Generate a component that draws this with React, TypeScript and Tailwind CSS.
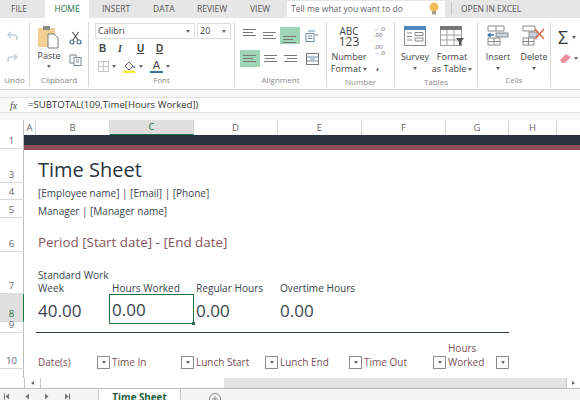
import React from "react";

const sans = "font-['Open_Sans','Noto_Sans',sans-serif]";

function Group({ w, label, children }: { w: string; label: string; children?: React.ReactNode }) {
  return (
    <div className={`${w} shrink-0 h-full flex flex-col border-r border-[#d9d9d9]`}>
      <div className="h-[53px] mt-[1px] flex">{children}</div>
      <div className="text-[8px] leading-[14px] text-[#8a8a8a] text-center whitespace-nowrap">{label}</div>
    </div>
  );
}

function Caret({ className = "" }: { className?: string }) {
  return <span className={`inline-block w-0 h-0 border-x-[2.5px] border-x-transparent border-t-[3px] border-t-[#666] ${className}`} />;
}

function FilterBtn() {
  return (
    <span className="inline-flex w-[13px] h-[13px] border border-[#8c8c8c] bg-white items-center justify-center shrink-0">
      <Caret />
    </span>
  );
}

function Lines({ active, rows, align = "l" }: { active?: boolean; rows: string; align?: string }) {
  const lines = [0, 1, 2];
  return (
    <div className={`w-[20px] h-[17px] flex flex-col ${rows} ${align === "l" ? "items-start" : align === "c" ? "items-center" : "items-end"} gap-[2px] px-[3px] ${active ? "bg-[#9fd5b7]" : ""}`}>
      {lines.map((i) => (
        <span key={i} className={`h-px bg-[#777] ${i === 1 ? "w-[10px]" : "w-[13px]"}`} />
      ))}
    </div>
  );
}

function Head({ t, on }: { t: string; on?: boolean }) {
  return (
    <div className={`h-full flex items-center justify-center border-r border-[#d4d4d4] text-[9.5px] ${on ? "bg-[#dfdfdf] border-b border-b-[#217346] text-[#217346]" : "text-[#666]"}`}>
      {t}
    </div>
  );
}

function RowHead({ t, on, h }: { t: string; on?: boolean; h: string }) {
  return (
    <div className={`${h} w-[24px] shrink-0 flex items-end justify-center pb-[1px] border-r border-b text-[9.5px] leading-[13px] ${on ? "bg-[#dfdfdf] border-r-[#217346] border-b-[#d4d4d4] text-[#217346]" : "border-r-[#bdbdbd] border-b-[#d9d9d9] text-[#666]"}`}>
      {t}
    </div>
  );
}

function NavArrow({ dir, bar }: { dir: "l" | "r"; bar?: boolean }) {
  return (
    <svg width="6" height="7" viewBox="0 0 6 7" fill="#777">
      {dir === "l" ? <path d="M5 .5v6L1.500 3.500z" /> : <path d="M1 .5v6l3.500-3z" />}
      {bar && <rect x={dir === "l" ? 0 : 5} y=".5" width="1" height="6" />}
    </svg>
  );
}

export default function App() {
  return (
    <div className={`w-[580px] h-[400px] overflow-hidden bg-white flex flex-col ${sans}`}>
      {/* Tabs */}
      <div className="h-[18px] shrink-0 bg-[#e6e6e6] flex items-center text-[8.5px] text-[#555]">
        <span className="ml-[11px] w-[34px]">FILE</span>
        <span className="w-[44px] h-full bg-white flex items-center justify-center text-[#217346]">HOME</span>
        <span className="ml-[13px] w-[51px]">INSERT</span>
        <span className="w-[44px]">DATA</span>
        <span className="w-[53px]">REVIEW</span>
        <span className="w-[37px]">VIEW</span>
        <div className="w-[158px] h-[16px] bg-white flex items-center pl-[4px] text-[8.5px] text-[#666]">
          Tell me what you want to do
          <svg className="ml-auto mr-[6px]" width="10" height="14" viewBox="0 0 10 14">
            <circle cx="5" cy="5" r="4.5" fill="#f0bd5a" />
            <rect x="3" y="9" width="4" height="3.5" fill="#a8a08c" />
          </svg>
        </div>
        <span className="ml-[6px] w-px h-[12px] bg-[#c4c4c4]" />
        <span className="ml-[9px] text-[#555]">OPEN IN EXCEL</span>
      </div>

      {/* Ribbon */}
      <div className="h-[72px] shrink-0 bg-white border-b border-[#d6d6d6] flex pt-[4px] pb-[2px]">
        <Group w="w-[30px]" label="Undo">
          <div className="w-full flex flex-col items-center gap-[9px] pt-[7px] pr-[5px]">
            <svg width="13" height="13" viewBox="0 0 13 13" fill="none" stroke="#c3d3dc" strokeWidth="1.6"><path d="M5 2 2 5l3 3M2 5h6a3 3 0 0 1 3 3v2" /></svg>
            <svg width="13" height="13" viewBox="0 0 13 13" fill="none" stroke="#c3d3dc" strokeWidth="1.6"><path d="M8 2l3 3-3 3M11 5H5a3 3 0 0 0-3 3v2" /></svg>
          </div>
        </Group>
        <Group w="w-[59px]" label="Clipboard">
          <div className="w-[38px] flex flex-col items-center pt-[2px]">
            <svg width="24" height="24" viewBox="0 0 24 24">
              <rect x="1" y="3" width="17" height="19" fill="#f1cf93" />
              <rect x="6" y="1" width="7" height="4" fill="#8c8c8c" />
              <path d="M11 9h6l4 4v10H11z" fill="#fff" stroke="#7b7b7b" />
            </svg>
            <span className="text-[9px] leading-[12px] text-[#444] mt-[1px]">Paste</span>
            <Caret className="mt-[3px]" />
          </div>
          <div className="flex-1 flex flex-col items-center gap-[9px] pt-[8px] pr-[5px]">
            <svg width="13" height="14" viewBox="0 0 13 14" fill="none" stroke="#4a6f8f" strokeWidth="1.2">
              <circle cx="3" cy="11" r="2" /><circle cx="10" cy="11" r="2" />
              <path d="M4 9 9.500 1M9 9 3.500 1" stroke="#555" />
            </svg>
            <svg width="13" height="12" viewBox="0 0 13 12" fill="none" stroke="#7a8a96"><rect x="1" y="1" width="6" height="8" /><rect x="5" y="3.500" width="7" height="8" fill="#fff" /><path d="M7 6h3M7 8h3" /></svg>
          </div>
        </Group>
        <Group w="w-[146px]" label="Font">
          <div className="flex-1 flex flex-col pl-[6px]">
            <div className="flex gap-[2px]">
              <div className="w-[100px] h-[16px] border border-[#dcdcdc] flex items-center pl-[2px] pr-[4px] text-[9px] text-[#444]">Calibri<Caret className="ml-auto" /></div>
              <div className="w-[34px] h-[16px] border border-[#dcdcdc] flex items-center pl-[2px] pr-[4px] text-[9px] text-[#444]">20<Caret className="ml-auto" /></div>
            </div>
            <div className="flex items-center mt-[2px] pl-[4px] h-[14px] text-[10px] text-[#444] font-['Liberation_Sans',sans-serif]">
              <span className="w-[19px] font-bold">B</span>
              <span className="w-[19px] italic font-bold font-['Liberation_Serif',serif]">I</span>
              <span className="w-[19px] underline font-bold">U</span>
              <span className="underline font-bold">D</span>
            </div>
            <div className="flex items-center mt-[4px] pl-[3px] h-[14px]">
              <svg width="11" height="11" viewBox="0 0 11 11" fill="none" stroke="#c6c6c6"><rect x=".5" y=".5" width="10" height="10" /><path d="M5.500 0v11M0 5.500h11" /></svg>
              <Caret className="ml-[3px]" />
              <svg className="ml-[7px]" width="13" height="13" viewBox="0 0 13 13"><path d="M2 6l4-4 4 4-4 4z" fill="#fff" stroke="#667" /><rect x="0" y="10.500" width="12" height="2.500" fill="#f2ee36" /><circle cx="11" cy="7" r="1" fill="#4a7fb0" /></svg>
              <Caret className="ml-[3px]" />
              <div className="ml-[7px] w-[13px] flex flex-col items-center text-[11px] leading-[11px] text-[#444] font-['Liberation_Sans',sans-serif]">A<span className="w-[13px] h-[2px] bg-[#3f6fa6]" /></div>
              <Caret className="ml-[3px]" />
            </div>
          </div>
        </Group>
        <Group w="w-[92px]" label="Alignment">
          <div className="flex-1 flex flex-col pl-[5px] pt-[4px] gap-[6px]">
            <div className="flex items-center h-[17px]">
              <Lines rows="justify-start pt-[2px]" />
              <Lines rows="justify-center" />
              <Lines active rows="justify-end pb-[1px]" />
              <svg className="ml-[5px]" width="14" height="12" viewBox="0 0 14 12" fill="none" stroke="#6d8ba5"><rect x="1" y="3.500" width="8" height="8" /><path d="M3 6h4M3 8.500h4M3 1h7M10 5h3" /></svg>
            </div>
            <div className="flex items-center h-[17px]">
              <Lines active rows="justify-center" />
              <Lines rows="justify-center" align="c" />
              <Lines rows="justify-center" align="r" />
              <svg className="ml-[6px]" width="13" height="12" viewBox="0 0 13 12" fill="none" stroke="#777"><rect x=".5" y=".5" width="12" height="11" /><path d="M.5 4h12M.5 8h12M4 6h5" stroke="#6d8ba5" /></svg>
            </div>
          </div>
        </Group>
        <Group w="w-[68px]" label="Number">
          <div className="w-[44px] flex flex-col items-center text-[9px] text-[#444] whitespace-nowrap">
            <span className="text-[10px] leading-[10px] mt-[3px]">ABC</span>
            <span className="text-[12px] leading-[12px]">123</span>
            <span className="leading-[12px] mt-[3px]">Number</span>
            <span className="leading-[12px] flex items-center">Format<Caret className="ml-[2px]" /></span>
          </div>
          <div className="flex-1 flex flex-col items-start gap-[6px] text-[6px] leading-[6px] text-[#555] pt-[3px] pl-[3px] whitespace-nowrap">
            <span><span className="text-[#3a76b5]">←</span>.0<br />.00</span>
            <span>.00<br /><span className="text-[#3a76b5]">→</span>.0</span>
            <span className="text-[11px] leading-[8px] font-bold pl-[2px]">,</span>
          </div>
        </Group>
        <Group w="w-[83px]" label="Tables">
          <div className="w-[40px] flex flex-col items-center">
            <svg className="mt-[3px]" width="22" height="20" viewBox="0 0 22 20" fill="none" stroke="#8a8a8a"><rect x=".5" y=".5" width="21" height="19" fill="#fff" /><rect x="0" y="0" width="22" height="4" fill="#4e86c0" stroke="none" /><path d="M3 7h5M3 10.500h5M3 14h5M11 6.500h8v3h-8zM11 12h8v3h-8z" /></svg>
            <span className="text-[9px] leading-[12px] text-[#444] mt-[5px]">Survey</span>
            <Caret className="mt-[4px]" />
          </div>
          <div className="w-[34px] flex flex-col items-center whitespace-nowrap">
            <svg className="mt-[3px]" width="24" height="20" viewBox="0 0 24 20" fill="none" stroke="#a0a0a0"><rect x=".5" y=".5" width="21" height="19" fill="#fff" /><rect x="0" y="0" width="22" height="4" fill="#777" stroke="none" /><path d="M0 9h22M0 14h22M7 4v16M14 4v16" /><path d="M16 12h8l-3 4v3h-2v-3z" fill="#555" stroke="none" /></svg>
            <span className="text-[9px] leading-[12px] text-[#444] mt-[5px]">Format</span>
            <span className="text-[9px] leading-[12px] text-[#444] flex items-center">as Table<Caret className="ml-[2px]" /></span>
          </div>
        </Group>
        <Group w="w-[73px]" label="Cells">
          <div className="w-[40px] flex flex-col items-center">
            <svg className="mt-[2px]" width="22" height="21" viewBox="0 0 22 21" fill="none" stroke="#8a8a8a"><path d="M1 1h16v5H1zM9 1v5M1 13h12v7H1zM7 13v7M1 16.500h12" /><rect x="9" y="8" width="12" height="4" fill="#c6d3df" /><path d="M7 10H1M3.500 8 1 10l2.500 2" stroke="#3a76b5" strokeWidth="1.400" /></svg>
            <span className="text-[9px] leading-[12px] text-[#444] mt-[5px]">Insert</span>
            <Caret className="mt-[4px]" />
          </div>
          <div className="w-[32px] flex flex-col items-center">
            <svg className="mt-[2px]" width="24" height="21" viewBox="0 0 24 21" fill="none" stroke="#8a8a8a"><path d="M1 1h12v5H1zM1 13h11v7H1zM6.500 13v7M1 16.500h11" /><rect x="7" y="7" width="8" height="5" fill="#c6d3df" /><path d="M13 4l9 10M22 4 13 14" stroke="#e06a45" strokeWidth="1.500" /></svg>
            <span className="text-[9px] leading-[12px] text-[#444] mt-[5px]">Delete</span>
            <Caret className="mt-[4px]" />
          </div>
        </Group>
        <div className="flex-1 flex flex-col pl-[7px] pt-[6px]">
          <div className="flex items-center text-[18px] leading-[18px] text-[#333]">Σ<Caret className="ml-[4px]" /></div>
          <div className="flex items-center mt-[7px] pl-[1px]">
            <svg width="13" height="11" viewBox="0 0 13 11"><path d="M1 7 7 1l5 3-6 6H3z" fill="#ec8fa0" /></svg>
            <Caret className="ml-[2px]" />
          </div>
        </div>
      </div>

      {/* Formula bar */}
      <div className="h-[30px] shrink-0 bg-[#f8f8f8] pt-[7px] pb-[7px]">
        <div className="h-[16px] border-y border-[#e2e2e2] flex items-center">
          <div className="w-[28px] shrink-0 h-full flex justify-end pr-[2px]">
            <span className="w-[18px] h-full bg-white flex items-center justify-start pl-[2px] text-[10px] italic text-[#444] font-['Liberation_Serif',serif]">fx</span>
          </div>
          <span className="flex-1 h-full bg-white flex items-center text-[9.6px] text-[#333]">=SUBTOTAL(109,Time[Hours Worked])</span>
        </div>
      </div>

      {/* Column headers */}
      <div className="h-[15px] shrink-0 bg-white grid grid-cols-[24px_12px_74px_84px_84px_84px_84px_63px_48px_23px] items-stretch">
        <div className="border-r border-[#bdbdbd]" />
        <Head t="A" /><Head t="B" /><Head t="C" on /><Head t="D" /><Head t="E" /><Head t="F" /><Head t="G" /><Head t="H" /><div />
      </div>

      {/* Grid */}
      <div className="flex-1 min-h-0 flex">
        <div className="w-[24px] shrink-0 flex flex-col">
          <RowHead t="1" h="h-[14px]" />
          <RowHead t="3" h="h-[34px]" />
          <RowHead t="4" h="h-[17px]" />
          <RowHead t="5" h="h-[18px]" />
          <RowHead t="6" h="h-[34px]" />
          <RowHead t="7" h="h-[42px]" />
          <RowHead t="8" h="h-[28px]" on />
          <RowHead t="9" h="h-[11px]" />
          <RowHead t="10" h="h-[36px]" />
          <div className="flex-1 border-r border-[#bdbdbd]" />
        </div>
        <div className="flex-1 min-w-0 flex flex-col text-[#3a4450]">
          <div className="h-[10px] shrink-0 bg-[#28333f]" />
          <div className="h-[5px] shrink-0 bg-[#8e4c54]" />
          <div className="h-[33px] shrink-0 pl-[14px] flex items-end text-[20px] leading-[26px] text-[#2b3440]">Time Sheet</div>
          <div className="h-[17px] shrink-0 pl-[14px] flex items-end text-[10px] leading-[14px]">[Employee name] | [Email] | [Phone]</div>
          <div className="h-[18px] shrink-0 pl-[14px] flex items-end text-[10px] leading-[14px]">Manager | [Manager name]</div>
          <div className="h-[34px] shrink-0 pl-[14px] flex items-end text-[13.4px] leading-[20px] text-[#85535a]">Period [Start date] - [End date]</div>
          <div className="h-[42px] shrink-0 pl-[14px] grid grid-cols-[72px_84px_84px_auto] items-end text-[10.1px] leading-[12px]">
            <span className="whitespace-nowrap"><span className="block leading-[14px]">Standard Work</span>Week</span>
            <span className="pl-[2px]">Hours Worked</span>
            <span className="pl-[2px]">Regular Hours</span>
            <span className="pl-[2px]">Overtime Hours</span>
          </div>
          <div className="h-[28px] shrink-0 pl-[14px] grid grid-cols-[71px_85px_84px_auto] items-stretch text-[17px] leading-[26px] text-[#3a4450]">
            <span className="flex items-center pt-[3px]">40.00</span>
            <span className="relative flex items-center pl-[2px] pt-[2px] border border-[#217346]">
              0.00
              <span className="absolute right-[-2px] bottom-[-2px] w-[3px] h-[3px] bg-[#217346]" />
            </span>
            <span className="flex items-center pl-[2px] pt-[3px]">0.00</span>
            <span className="flex items-center pl-[2px] pt-[3px]">0.00</span>
          </div>
          <div className="h-[11px] shrink-0 pl-[12px]">
            <div className="w-[473px] h-[11px] border-b border-[#2c3a34]" />
          </div>
          <div className="h-[36px] shrink-0 pl-[14px] grid grid-cols-[72px_84px_84px_84px_84px_63px] items-end text-[10px] leading-[14px] text-[#7a5058]">
            <span className="flex items-center justify-between">Date(s)<FilterBtn /></span>
            <span className="flex items-center justify-between pl-[2px]">Time In<FilterBtn /></span>
            <span className="flex items-center justify-between pl-[2px]">Lunch Start<FilterBtn /></span>
            <span className="flex items-center justify-between pl-[2px]">Lunch End<FilterBtn /></span>
            <span className="flex items-center justify-between pl-[2px]">Time Out<FilterBtn /></span>
            <span className="flex items-end justify-between pl-[2px]"><span>Hours<br />Worked</span><FilterBtn /></span>
          </div>
        </div>
      </div>

      {/* Scrollbar */}
      <div className="h-[11px] shrink-0 bg-white border-b border-[#bdbdbd] flex pl-[24px]">
        <div className="w-[17px] h-full border-x border-[#c9c9c9] flex items-center justify-center">
          <span className="w-0 h-0 border-y-[2.5px] border-y-transparent border-r-[3px] border-r-[#666]" />
        </div>
        <div className="w-[183px]" />
        <div className="flex-1 bg-[#e3e3e3]" />
        <div className="w-[14px] h-full border-l border-[#c9c9c9] flex items-center justify-center">
          <span className="w-0 h-0 border-y-[2.5px] border-y-transparent border-l-[3px] border-l-[#666]" />
        </div>
      </div>

      {/* Sheet tabs */}
      <div className="h-[11px] shrink-0 bg-[#f4f4f4] flex items-start">
        <div className="w-[98px] pl-[4px] pt-[4px] flex gap-[14px]">
          <NavArrow dir="l" bar /><NavArrow dir="l" /><NavArrow dir="r" /><NavArrow dir="r" bar />
        </div>
        <div className="w-[83px] h-[11px] bg-white border-x border-[#c9c9c9] text-center text-[9.8px] leading-[18px] font-bold text-[#1f5f3f]">Time Sheet</div>
        <svg className="ml-[28px] mt-[4px]" width="12" height="12" viewBox="0 0 12 12" fill="none" stroke="#888"><circle cx="6" cy="6" r="5.500" /><path d="M3 6h6M6 3v6" /></svg>
      </div>
    </div>
  );
}
